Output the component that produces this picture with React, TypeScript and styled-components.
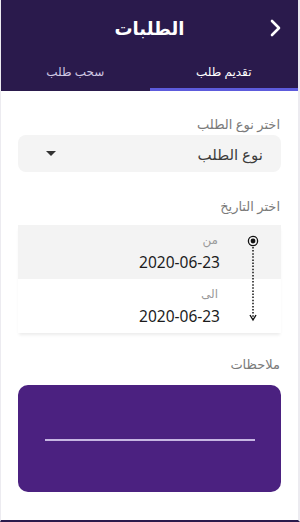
import React, { useState } from 'react';
import styled, { createGlobalStyle } from 'styled-components';

const GlobalStyle = createGlobalStyle`
  html, body {
    margin: 0;
    padding: 0;
    background: #ffffff;
    font-family: 'Noto Sans', 'DejaVu Sans', sans-serif;
  }
`;

const Screen = styled.div`
  width: 300px;
  height: 522px;
  box-sizing: border-box;
  display: flex;
  flex-direction: column;
  direction: rtl;
  background: #ffffff;
  border-left: 1px solid #ecebf0;
  border-right: 2px solid #ecebf0;
  border-bottom: 2px solid #2a1a4c;
  overflow: hidden;
`;

const Header = styled.div`
  background: #2a1a4c;
  display: flex;
  flex-direction: column;
`;

const TopBar = styled.div`
  height: 56px;
  display: flex;
  align-items: center;
  justify-content: center;
  position: relative;
`;

const Title = styled.div`
  color: #ffffff;
  font-size: 18px;
  font-weight: 700;
`;

const BackButton = styled.button`
  position: absolute;
  right: 12px;
  top: 17px;
  background: none;
  border: none;
  padding: 0;
  width: 20px;
  height: 22px;
  display: flex;
  align-items: center;
  justify-content: center;
`;

const Tabs = styled.div`
  display: flex;
  height: 35px;
`;

const Tab = styled.div<{ $active?: boolean }>`
  flex: 1;
  display: flex;
  align-items: center;
  justify-content: center;
  padding-bottom: 2px;
  font-size: 12px;
  font-weight: 400;
  color: ${(p) => (p.$active ? '#ffffff' : '#cfc7e2')};
  border-bottom: 3px solid ${(p) => (p.$active ? '#5d5bdc' : 'transparent')};
  box-sizing: border-box;
`;

const Body = styled.div`
  display: flex;
  flex-direction: column;
  padding: 24px 17px 0 17px;
`;

const Label = styled.div<{ $gap: number }>`
  color: #7a7a7a;
  font-size: 13px;
  line-height: 18px;
  margin-bottom: ${(p) => p.$gap}px;
  padding-right: 1px;
`;

const Select = styled.div`
  height: 37px;
  background: #f4f4f4;
  border-radius: 8px;
  display: flex;
  align-items: center;
  justify-content: space-between;
  padding: 0 18px 0 28px;
  margin-bottom: 25px;
`;

const SelectText = styled.span`
  color: #3c3c3c;
  font-size: 15px;
`;

const Caret = styled.span`
  width: 0;
  height: 0;
  border-left: 5px solid transparent;
  border-right: 5px solid transparent;
  border-top: 5px solid #333333;
`;

const DateCard = styled.div`
  position: relative;
  display: flex;
  flex-direction: column;
  box-shadow: 0 3px 3px -1px rgba(0, 0, 0, 0.08);
  margin-bottom: 22px;
`;

const DateRow = styled.div<{ $shaded?: boolean }>`
  height: 54px;
  background: ${(p) => (p.$shaded ? '#f3f3f3' : '#ffffff')};
  display: flex;
  flex-direction: column;
  padding: 6px 61px 0 0;
  box-sizing: border-box;
`;

const DateCaption = styled.div`
  color: #9a9a9a;
  font-size: 12px;
  line-height: 18px;
  padding-right: 2px;
`;

const DateValue = styled.div`
  color: #1c1c1c;
  font-size: 15.5px;
  line-height: 20px;
  margin-top: 3px;
  direction: ltr;
  text-align: right;
`;

const RangeIcon = styled.svg`
  position: absolute;
  right: 22px;
  top: 10px;
`;

const Notes = styled.div`
  height: 107px;
  background: #4b2180;
  border-radius: 10px;
  display: flex;
  align-items: center;
  justify-content: center;
`;

const NotesLine = styled.div`
  width: 210px;
  height: 2px;
  background: #c6b6e2;
  margin-top: 3px;
`;

export default function App() {
  const [tab, setTab] = useState(0);

  return (
    <>
      <GlobalStyle />
      <Screen>
        <Header>
          <TopBar>
            <BackButton>
              <svg width="14" height="20" viewBox="0 0 14 20">
                <path
                  d="M3 3 L10 10 L3 17"
                  fill="none"
                  stroke="#ffffff"
                  strokeWidth="2.6"
                  strokeLinecap="round"
                  strokeLinejoin="round"
                />
              </svg>
            </BackButton>
            <Title>الطلبات</Title>
          </TopBar>
          <Tabs>
            <Tab $active={tab === 0} onClick={() => setTab(0)}>
              تقديم طلب
            </Tab>
            <Tab $active={tab === 1} onClick={() => setTab(1)}>
              سحب طلب
            </Tab>
          </Tabs>
        </Header>

        <Body>
          <Label $gap={2}>اختر نوع الطلب</Label>
          <Select>
            <SelectText>نوع الطلب</SelectText>
            <Caret />
          </Select>

          <Label $gap={10}>اختر التاريخ</Label>
          <DateCard>
            <DateRow $shaded>
              <DateCaption>من</DateCaption>
              <DateValue>2020-06-23</DateValue>
            </DateRow>
            <DateRow>
              <DateCaption>الى</DateCaption>
              <DateValue>2020-06-23</DateValue>
            </DateRow>
            <RangeIcon width="12" height="92" viewBox="0 0 12 92">
              <circle cx="6" cy="6" r="4.6" fill="none" stroke="#111" strokeWidth="1.3" />
              <circle cx="6" cy="6" r="2.4" fill="#111" />
              <line
                x1="6"
                y1="12"
                x2="6"
                y2="84"
                stroke="#111"
                strokeWidth="1.5"
                strokeDasharray="1.5 1.6"
              />
              <path d="M3 80 L6 85 L9 80" fill="none" stroke="#111" strokeWidth="1.4" />
            </RangeIcon>
          </DateCard>

          <Label $gap={12}>ملاحظات</Label>
          <Notes>
            <NotesLine />
          </Notes>
        </Body>
      </Screen>
    </>
  );
}
